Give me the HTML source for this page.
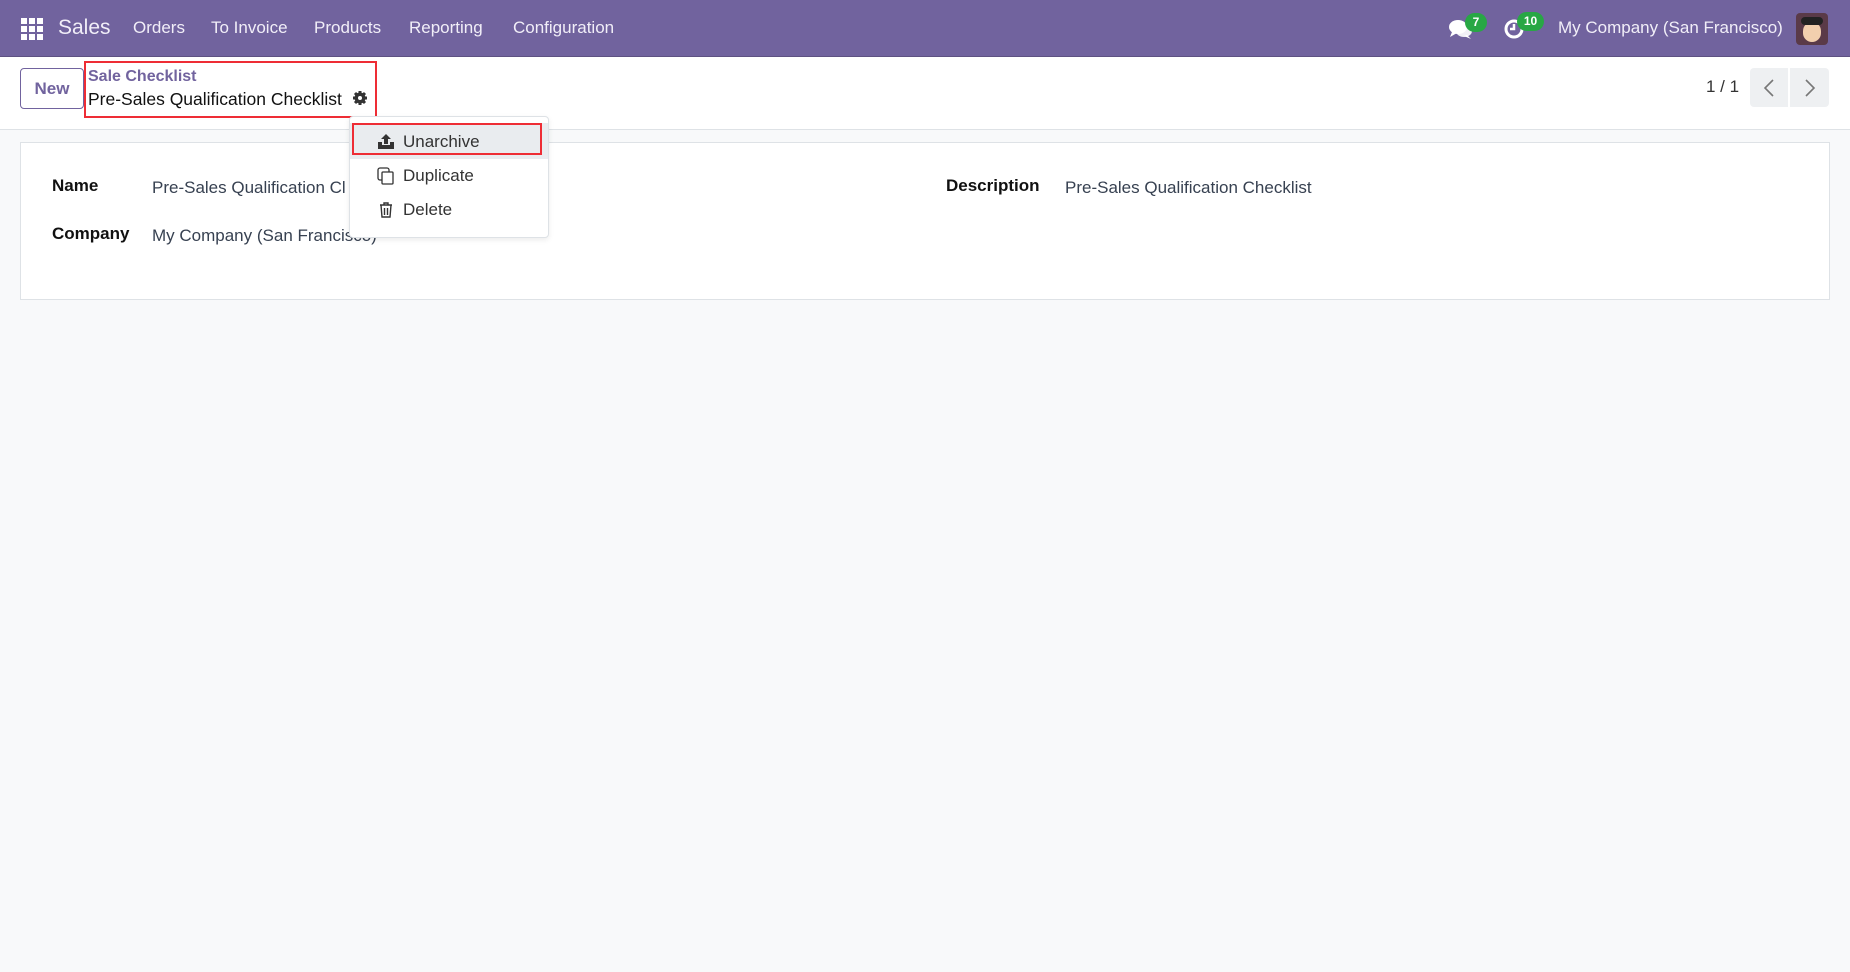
<!DOCTYPE html>
<html><head><meta charset="utf-8"><style>
*{box-sizing:border-box;margin:0;padding:0}
body{width:1850px;height:972px;background:#f8f9fa;font-family:"Liberation Sans",sans-serif;color:#374151;position:relative;overflow:hidden}
.nav{position:absolute;left:0;top:0;width:1850px;height:57px;background:#71639e;border-bottom:1px solid #5e5282;color:#fff}
.nav span{position:absolute;top:18px;font-size:17px;color:#f1eef8}
.cp{position:absolute;top:57px;left:0;width:1850px;height:73px;background:#fff;border-bottom:1px solid #dee2e6}
.abs{position:absolute}
.card{position:absolute;left:20px;top:142px;width:1810px;height:158px;background:#fff;border:1px solid #dee2e6}
.lbl{position:absolute;font-weight:bold;font-size:17px;color:#111}
.val{position:absolute;font-size:17px;color:#374151}
.badge{position:absolute;background:#28a745;color:#fff;font-size:12px;font-weight:bold;border-radius:10px;height:19px;line-height:19px;text-align:center}
</style></head><body>
<div class="nav">
  <div class="abs" style="left:21px;top:18px;width:22px;height:22px;display:grid;grid-template-columns:repeat(3,6px);gap:2px">
    <i style="background:#fff"></i><i style="background:#fff"></i><i style="background:#fff"></i><i style="background:#fff"></i><i style="background:#fff"></i><i style="background:#fff"></i><i style="background:#fff"></i><i style="background:#fff"></i><i style="background:#fff"></i>
  </div>
  <span style="left:58px;top:16px;font-size:21px">Sales</span>
  <span style="left:133px">Orders</span>
  <span style="left:211px">To Invoice</span>
  <span style="left:314px">Products</span>
  <span style="left:409px">Reporting</span>
  <span style="left:513px">Configuration</span>
  <svg class="abs" style="left:1449px;top:18px" width="24" height="22" viewBox="0 0 24 22"><ellipse cx="9" cy="9" rx="9" ry="7" fill="#fff"/><ellipse cx="15" cy="13" rx="8" ry="6" fill="#fff" opacity=".9"/><path d="M3 14 L1 19 L8 15Z M18 17 L22 21 L15 18Z" fill="#fff"/></svg>
  <div class="badge" style="left:1465px;top:13px;width:22px">7</div>
  <svg class="abs" style="left:1503px;top:18px" width="22" height="22" viewBox="0 0 22 22"><circle cx="11" cy="11" r="8" fill="none" stroke="#fff" stroke-width="3"/><path d="M11 6 V11 H7" stroke="#fff" stroke-width="2.5" fill="none"/></svg>
  <div class="badge" style="left:1517px;top:12px;width:27px">10</div>
  <span style="left:1558px">My Company (San Francisco)</span>
  <div class="abs" style="left:1796px;top:13px;width:32px;height:32px;border-radius:4px;background:#5a3a48;overflow:hidden"><div style="position:absolute;left:7px;top:9px;width:18px;height:20px;border-radius:9px;background:#f2cfae"></div><div style="position:absolute;left:5px;top:4px;width:22px;height:8px;border-radius:4px;background:#222"></div></div>
</div>
<div class="cp">
  <div class="abs" style="left:20px;top:11px;width:64px;height:41px;border:1px solid #71639e;border-radius:4px;color:#71639e;font-weight:bold;font-size:17px;text-align:center;line-height:39px">New</div>
  <div class="abs" style="left:84px;top:4px;width:293px;height:57px;border:2px solid #ee2d35"></div>
  <div class="abs" style="left:88px;top:11px;font-size:16px;font-weight:bold;color:#71639e">Sale Checklist</div>
  <div class="abs" style="left:88px;top:32px;font-size:17.5px;color:#111">Pre-Sales Qualification Checklist</div>
  <svg class="abs" style="left:352px;top:33px" width="16" height="16" viewBox="0 0 16 16"><circle cx="8" cy="8" r="5.5" fill="#333"/><g stroke="#333" stroke-width="3"><path d="M8 1V15M1 8H15M3 3L13 13M13 3L3 13"/></g><circle cx="8" cy="8" r="2" fill="#fff"/></svg>
  <div class="abs" style="left:1706px;top:20px;font-size:17px;color:#333">1 / 1</div>
  <div class="abs" style="left:1750px;top:11px;width:38px;height:39px;background:#eef0f2;border-radius:4px 0 0 4px"></div>
  <div class="abs" style="left:1790px;top:11px;width:39px;height:39px;background:#eef0f2;border-radius:0 4px 4px 0"></div>
  <svg class="abs" style="left:1762px;top:21px" width="14" height="20"><path d="M11 2L3 10L11 18" stroke="#777" stroke-width="1.6" fill="none"/></svg>
  <svg class="abs" style="left:1803px;top:21px" width="14" height="20"><path d="M3 2L11 10L3 18" stroke="#777" stroke-width="1.6" fill="none"/></svg>
</div>
<div class="card">
  <div class="lbl" style="left:31px;top:33px">Name</div>
  <div class="val" style="left:131px;top:35px">Pre-Sales Qualification Cl</div>
  <div class="lbl" style="left:31px;top:81px">Company</div>
  <div class="val" style="left:131px;top:83px">My Company (San Francisco)</div>
  <div class="lbl" style="left:925px;top:33px">Description</div>
  <div class="val" style="left:1044px;top:35px">Pre-Sales Qualification Checklist</div>
</div>
<div class="abs" style="left:349px;top:116px;width:200px;height:122px;background:#fff;border:1px solid #dee2e6;border-radius:4px;box-shadow:0 2px 6px rgba(0,0,0,.08)">
  <div class="abs" style="left:0;top:6px;width:198px;height:36px;background:#e9ecef"></div>
  <div class="abs" style="left:2px;top:6px;width:190px;height:32px;border:2px solid #ee2d35"></div>
  <svg class="abs" style="left:27px;top:15px" width="18" height="18" viewBox="0 0 18 18"><path d="M1 10V17H17V10H13V13H5V10Z" fill="#333"/><path d="M9 2L4 7H7V12H11V7H14Z" fill="#333"/></svg>
  <div class="abs" style="left:53px;top:15px;font-size:17px;color:#333">Unarchive</div>
  <svg class="abs" style="left:27px;top:50px" width="18" height="18" viewBox="0 0 18 18"><rect x="1" y="1" width="11" height="12" rx="2" fill="none" stroke="#333" stroke-width="1.3"/><rect x="5" y="5" width="11" height="12" rx="1" fill="#fff" stroke="#333" stroke-width="1.3"/></svg>
  <div class="abs" style="left:53px;top:49px;font-size:17px;color:#333">Duplicate</div>
  <svg class="abs" style="left:28px;top:84px" width="16" height="18" viewBox="0 0 16 18"><path d="M2 4H14M6 4V2H10V4M3 4L4 16H12L13 4M6.5 7V14M9.5 7V14" stroke="#333" stroke-width="1.4" fill="none"/></svg>
  <div class="abs" style="left:53px;top:83px;font-size:17px;color:#333">Delete</div>
</div>
</body></html>
